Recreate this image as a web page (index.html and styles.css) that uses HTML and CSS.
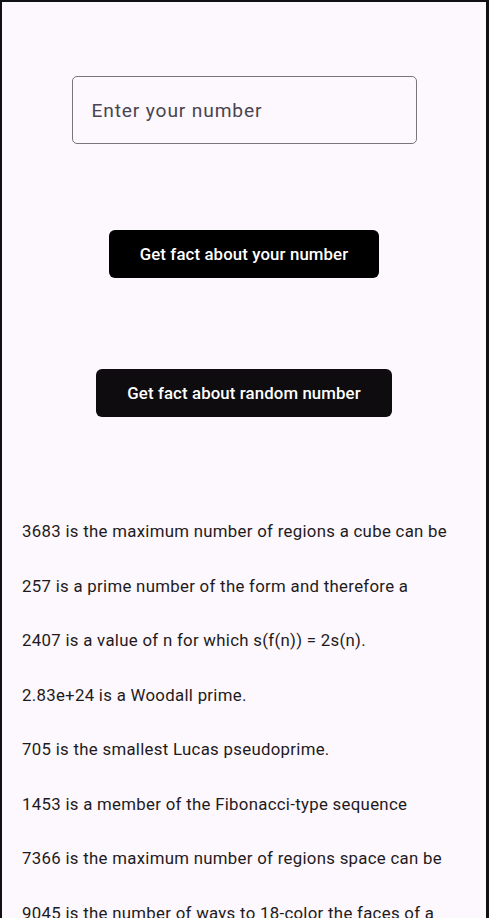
FILE: index.html
```html
<!DOCTYPE html>
<html lang="en">
<head>
<meta charset="utf-8">
<title>Number facts</title>
<link rel="stylesheet" href="styles.css">
</head>
<body>
<main class="screen">
  <div class="field">
    <input class="field-input" type="text" placeholder="Enter your number">
  </div>
  <button class="btn btn-own">Get fact about your number</button>
  <button class="btn btn-random">Get fact about random number</button>
  <ul class="facts">
    <li class="fact">3683 is the maximum number of regions a cube can be</li>
    <li class="fact">257 is a prime number of the form and therefore a</li>
    <li class="fact">2407 is a value of n for which s(f(n)) = 2s(n).</li>
    <li class="fact">2.83e+24 is a Woodall prime.</li>
    <li class="fact">705 is the smallest Lucas pseudoprime.</li>
    <li class="fact">1453 is a member of the Fibonacci-type sequence</li>
    <li class="fact">7366 is the maximum number of regions space can be</li>
    <li class="fact">9045 is the number of ways to 18-color the faces of a</li>
  </ul>
</main>
</body>
</html>
```
FILE: styles.css
```css
html, body {
  margin: 0;
  padding: 0;
  background: #111012;
  height: 918px;
  overflow: hidden;
}
.screen {
  box-sizing: border-box;
  height: 918px;
  margin: 2px 3px 0 2px;
  background: #fdf7fe;
  display: flex;
  flex-direction: column;
  align-items: center;
  font-family: Roboto, "Noto Sans", sans-serif;
  color: #1d1b20;
  overflow: hidden;
}
.screen > * {
  flex-shrink: 0;
}
.field {
  margin-top: 74px;
  width: 345px;
  height: 68px;
}
.field-input {
  box-sizing: border-box;
  width: 100%;
  height: 100%;
  border: 1px solid #79747e;
  border-radius: 5px;
  background: transparent;
  padding: 0 0 0 19px;
  font-family: Roboto, sans-serif;
  font-size: 19.2px;
  letter-spacing: 0.85px;
  color: #1d1b20;
  outline: none;
}
.field-input::placeholder {
  color: #49454f;
}
.btn {
  box-sizing: border-box;
  height: 48px;
  border: none;
  border-radius: 6px;
  background: #000;
  color: #fff;
  font-family: Roboto, sans-serif;
  font-size: 16.8px;
  font-weight: 500;
  letter-spacing: 0.12px;
  padding: 0;
}
.btn-own {
  margin-top: 86px;
  width: 270px;
}
.btn-random {
  margin-top: 91px;
  width: 296px;
  background: #0e0c0f;
}
.facts {
  align-self: stretch;
  list-style: none;
  margin: 104px 0 0 0;
  padding: 0 0 0 20px;
}
.fact {
  font-size: 16.8px;
  letter-spacing: 0.3px;
  line-height: 20px;
  height: 20px;
  margin-bottom: 34.57px;
  white-space: nowrap;
  overflow: hidden;
}
```
